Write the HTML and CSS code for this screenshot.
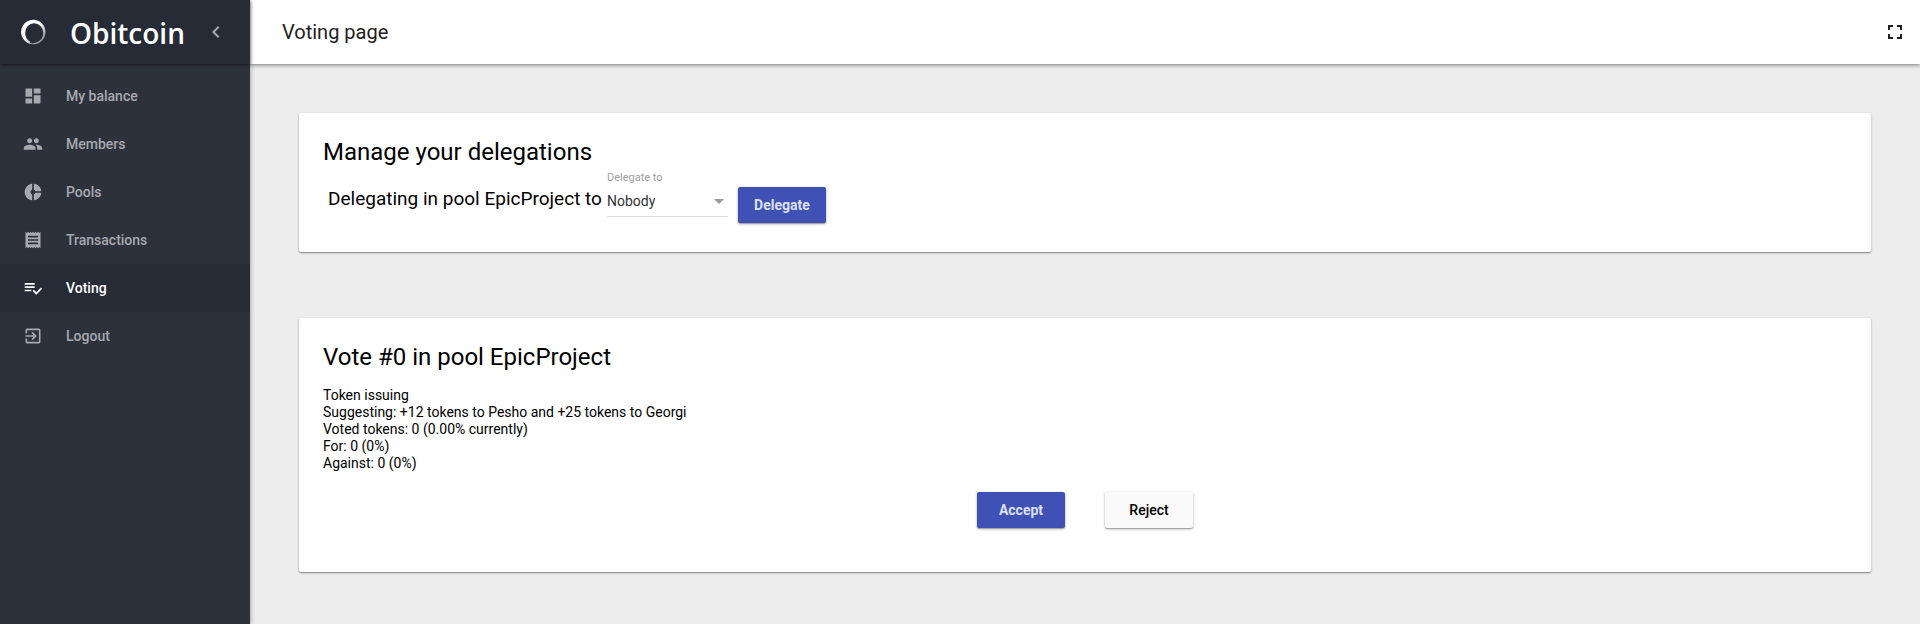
FILE: index.html
```html
<!DOCTYPE html>
<html lang="en">
<head>
<meta charset="utf-8">
<title>Obitcoin - Voting page</title>
<link rel="stylesheet" href="styles.css">
</head>
<body>
<div class="app">
  <aside class="sidebar">
    <div class="brand">
      <svg class="brand-logo" viewBox="0 0 26 26" aria-hidden="true">
        <defs>
          <linearGradient id="ring" x1="0" y1="0" x2="1" y2="1">
            <stop offset="0.45" stop-color="#fff"/>
            <stop offset="0.9" stop-color="#85898f"/>
          </linearGradient>
        </defs>
        <path fill="url(#ring)" fill-rule="evenodd" d="M13.300 0.800A12.200 12.200 0 1 1 13.300 25.200 12.200 12.200 0 1 1 13.300 0.800zM14 4.300A9.300 9.300 0 0 0 5.200 14C5.200 18 7 21 10.200 22.600L9.800 24C11.500 24.500 13 24.500 14.500 24 19.500 23.300 23.300 19.300 23.300 13.800A9.500 9.500 0 0 0 14 4.300z"/>
      </svg>
      <span class="brand-name">Obitcoin</span>
      <button class="icon-button" type="button" aria-label="Collapse menu">
        <svg class="icon icon-large" viewBox="0 0 24 24"><path d="M15.410 7.410 14 6l-6 6 6 6 1.410-1.410L10.830 12z"/></svg>
      </button>
    </div>
    <nav class="menu">
      <a class="menu-item" href="#balance">
        <svg class="icon" viewBox="0 0 24 24"><path d="M3 13h8V3H3v10zm0 8h8v-6H3v6zm10 0h8V11h-8v10zm0-18v6h8V3h-8z"/></svg>
        <span>My balance</span>
      </a>
      <a class="menu-item" href="#members">
        <svg class="icon" viewBox="0 0 24 24"><path d="M16 11c1.660 0 2.990-1.340 2.990-3S17.660 5 16 5c-1.660 0-3 1.340-3 3s1.340 3 3 3zm-8 0c1.660 0 2.990-1.340 2.990-3S9.660 5 8 5C6.340 5 5 6.340 5 8s1.340 3 3 3zm0 2c-2.330 0-7 1.170-7 3.500V19h14v-2.500c0-2.330-4.670-3.500-7-3.500zm8 0c-.29 0-.62.020-.97.050 1.160.84 1.970 1.970 1.970 3.450V19h6v-2.500c0-2.330-4.670-3.500-7-3.500z"/></svg>
        <span>Members</span>
      </a>
      <a class="menu-item" href="#pools">
        <svg class="icon" viewBox="0 0 24 24"><path d="M11 9.160V2c-5 .5-9 4.790-9 10s4 9.500 9 10v-7.160c-1-.41-2-1.520-2-2.840s1-2.430 2-2.840zM14.860 11H22c-.48-4.750-4-8.530-9-9v7.160c1 .3 1.520.98 1.860 1.840zM13 14.840V22c5-.47 8.520-4.250 9-9h-7.140c-.34.860-.86 1.540-1.860 1.840z"/></svg>
        <span>Pools</span>
      </a>
      <a class="menu-item" href="#transactions">
        <svg class="icon" viewBox="0 0 24 24"><path d="M18 17H6v-2h12v2zm0-4H6v-2h12v2zm0-4H6V7h12v2zM3 22l1.500-1.500L6 22l1.500-1.500L9 22l1.500-1.500L12 22l1.500-1.500L15 22l1.500-1.500L18 22l1.500-1.500L21 22V2l-1.500 1.500L18 2l-1.500 1.500L15 2l-1.500 1.500L12 2l-1.500 1.500L9 2 7.500 3.500 6 2 4.500 3.500 3 2v20z"/></svg>
        <span>Transactions</span>
      </a>
      <a class="menu-item menu-item-active" href="#voting" aria-current="page">
        <svg class="icon" viewBox="0 0 24 24"><path d="M14 10H2v2h12v-2zm0-4H2v2h12V6zM2 16h8v-2H2v2zm19.500-4.500L23 13l-6.990 7-4.510-4.500L13 14l3.010 3 5.490-5.500z"/></svg>
        <span>Voting</span>
      </a>
      <a class="menu-item" href="#logout">
        <svg class="icon" viewBox="0 0 24 24"><path d="M10.090 15.590 11.500 17l5-5-5-5-1.410 1.410L12.670 11H3v2h9.670l-2.580 2.590zM19 3H5c-1.110 0-2 .9-2 2v4h2V5h14v14H5v-4H3v4c0 1.100.89 2 2 2h14c1.100 0 2-.9 2-2V5c0-1.100-.9-2-2-2z"/></svg>
        <span>Logout</span>
      </a>
    </nav>
  </aside>
  <div class="page">
    <header class="topbar">
      <h1 class="topbar-title">Voting page</h1>
      <button class="icon-button" type="button" aria-label="Full screen">
        <svg class="icon icon-large" viewBox="0 0 24 24"><path d="M5 5h5v2H7v3H5zM14 5h5v5h-2V7h-3zM17 14h2v5h-5v-2h3zM5 14h2v3h3v2H5z"/></svg>
      </button>
    </header>
    <main class="content">
      <section class="card">
        <h2 class="card-title">Manage your delegations</h2>
        <form class="delegation">
          <span class="delegation-text">Delegating in pool EpicProject to</span>
          <div class="field">
            <label class="field-label" for="delegate">Delegate to</label>
            <select class="field-select" id="delegate"><option>Nobody</option></select>
          </div>
          <button class="button button-primary" type="button">Delegate</button>
        </form>
      </section>
      <section class="card">
        <h2 class="card-title">Vote #0 in pool EpicProject</h2>
        <div class="vote-details">
          <div>Token issuing</div>
          <div>Suggesting: +12 tokens to Pesho and +25 tokens to Georgi</div>
          <div>Voted tokens: 0 (0.00% currently)</div>
          <div>For: 0 (0%)</div>
          <div>Against: 0 (0%)</div>
        </div>
        <div class="vote-actions">
          <button class="button button-primary" type="button">Accept</button>
          <button class="button" type="button">Reject</button>
        </div>
      </section>
    </main>
  </div>
</div>
</body>
</html>
```
FILE: styles.css
```css
* {
  box-sizing: border-box;
}

body {
  margin: 0;
  font-family: Roboto, "Liberation Sans", sans-serif;
  font-size: 14px;
  line-height: 17px;
  color: #000;
  background: #ededed;
}

h1,
h2 {
  margin: 0;
  font-weight: 400;
}

.app {
  display: flex;
  min-height: 100vh;
}

.icon {
  display: block;
  flex: none;
  width: 20px;
  height: 20px;
  fill: currentColor;
}

.icon-large {
  width: 24px;
  height: 24px;
}

.icon-button {
  padding: 0;
  border: 0;
  background: none;
  color: inherit;
  cursor: pointer;
}

.sidebar {
  z-index: 2;
  flex: none;
  width: 250px;
  color: #a7a9ae;
  background: #2d313c;
  box-shadow: 0 1px 5px rgba(0, 0, 0, 0.4);
}

.brand {
  display: flex;
  align-items: center;
  height: 64px;
  padding: 0 22px 0 20px;
  background: #272b35;
  box-shadow: 0 1px 3px rgba(0, 0, 0, 0.5);
}

.brand-logo {
  width: 26px;
  height: 26px;
}

.brand-name {
  flex: 1;
  padding: 2px 0 0 24px;
  font: 600 28px/40px "Open Sans", "Noto Sans", sans-serif;
  color: #fff;
}

.menu {
  padding-top: 8px;
}

.menu-item {
  display: flex;
  align-items: center;
  gap: 23px;
  height: 48px;
  padding: 0 23px;
  font-weight: 500;
  color: inherit;
  text-decoration: none;
}

.menu-item-active {
  color: #fff;
  background: #272b35;
}

.page {
  flex: 1;
  min-width: 0;
}

.topbar {
  display: flex;
  align-items: center;
  justify-content: space-between;
  height: 64px;
  padding: 0 13px 0 32px;
  color: #212121;
  background: #fff;
  box-shadow: 0 1px 4px rgba(0, 0, 0, 0.5);
}

.topbar-title {
  font-size: 20px;
  line-height: 24px;
}

.content {
  display: grid;
  gap: 66px;
  padding: 49px;
}

.card {
  padding: 24px;
  background: #fff;
  border-radius: 2px;
  box-shadow: 0 1px 3px rgba(0, 0, 0, 0.2), 0 1px 1px rgba(0, 0, 0, 0.3);
}

.card-title {
  font-size: 24px;
  line-height: 30px;
}

.delegation {
  display: flex;
  align-items: flex-start;
  padding: 4px 5px 5px;
}

.delegation-text {
  padding-top: 16px;
  font-size: 19px;
  line-height: 24px;
}

.field {
  width: 121px;
  margin: 0 10px 0 5px;
}

.field-label {
  display: block;
  font-size: 11px;
  line-height: 14px;
  color: #a0a0a0;
}

.field-select {
  display: block;
  width: 100%;
  height: 32px;
  padding: 2px 0 0;
  border: 0;
  border-bottom: 1px solid #dcdcdc;
  border-radius: 0;
  appearance: none;
  font: inherit;
  color: #333;
  background: url("data:image/svg+xml,%3Csvg xmlns='http://www.w3.org/2000/svg' viewBox='0 0 10 5'%3E%3Cpath d='M0 0h10L5 5z' fill='%23999'/%3E%3C/svg%3E") right 4px top 14px / 10px 5px no-repeat;
}

.button {
  width: 88px;
  height: 36px;
  padding: 0;
  border: 0;
  border-radius: 2px;
  font: inherit;
  font-weight: 500;
  color: #000;
  background: #fafafa;
  box-shadow: 0 1px 3px rgba(0, 0, 0, 0.3), 0 1px 1px rgba(0, 0, 0, 0.2);
  cursor: pointer;
}

.button-primary {
  font-weight: 700;
  color: #dde0f4;
  background: #3f51b5;
}

.delegation .button {
  margin-top: 16px;
}

.vote-details {
  padding-top: 15px;
}

.vote-actions {
  display: flex;
  justify-content: center;
  gap: 40px;
  padding: 20px 0;
}
```
